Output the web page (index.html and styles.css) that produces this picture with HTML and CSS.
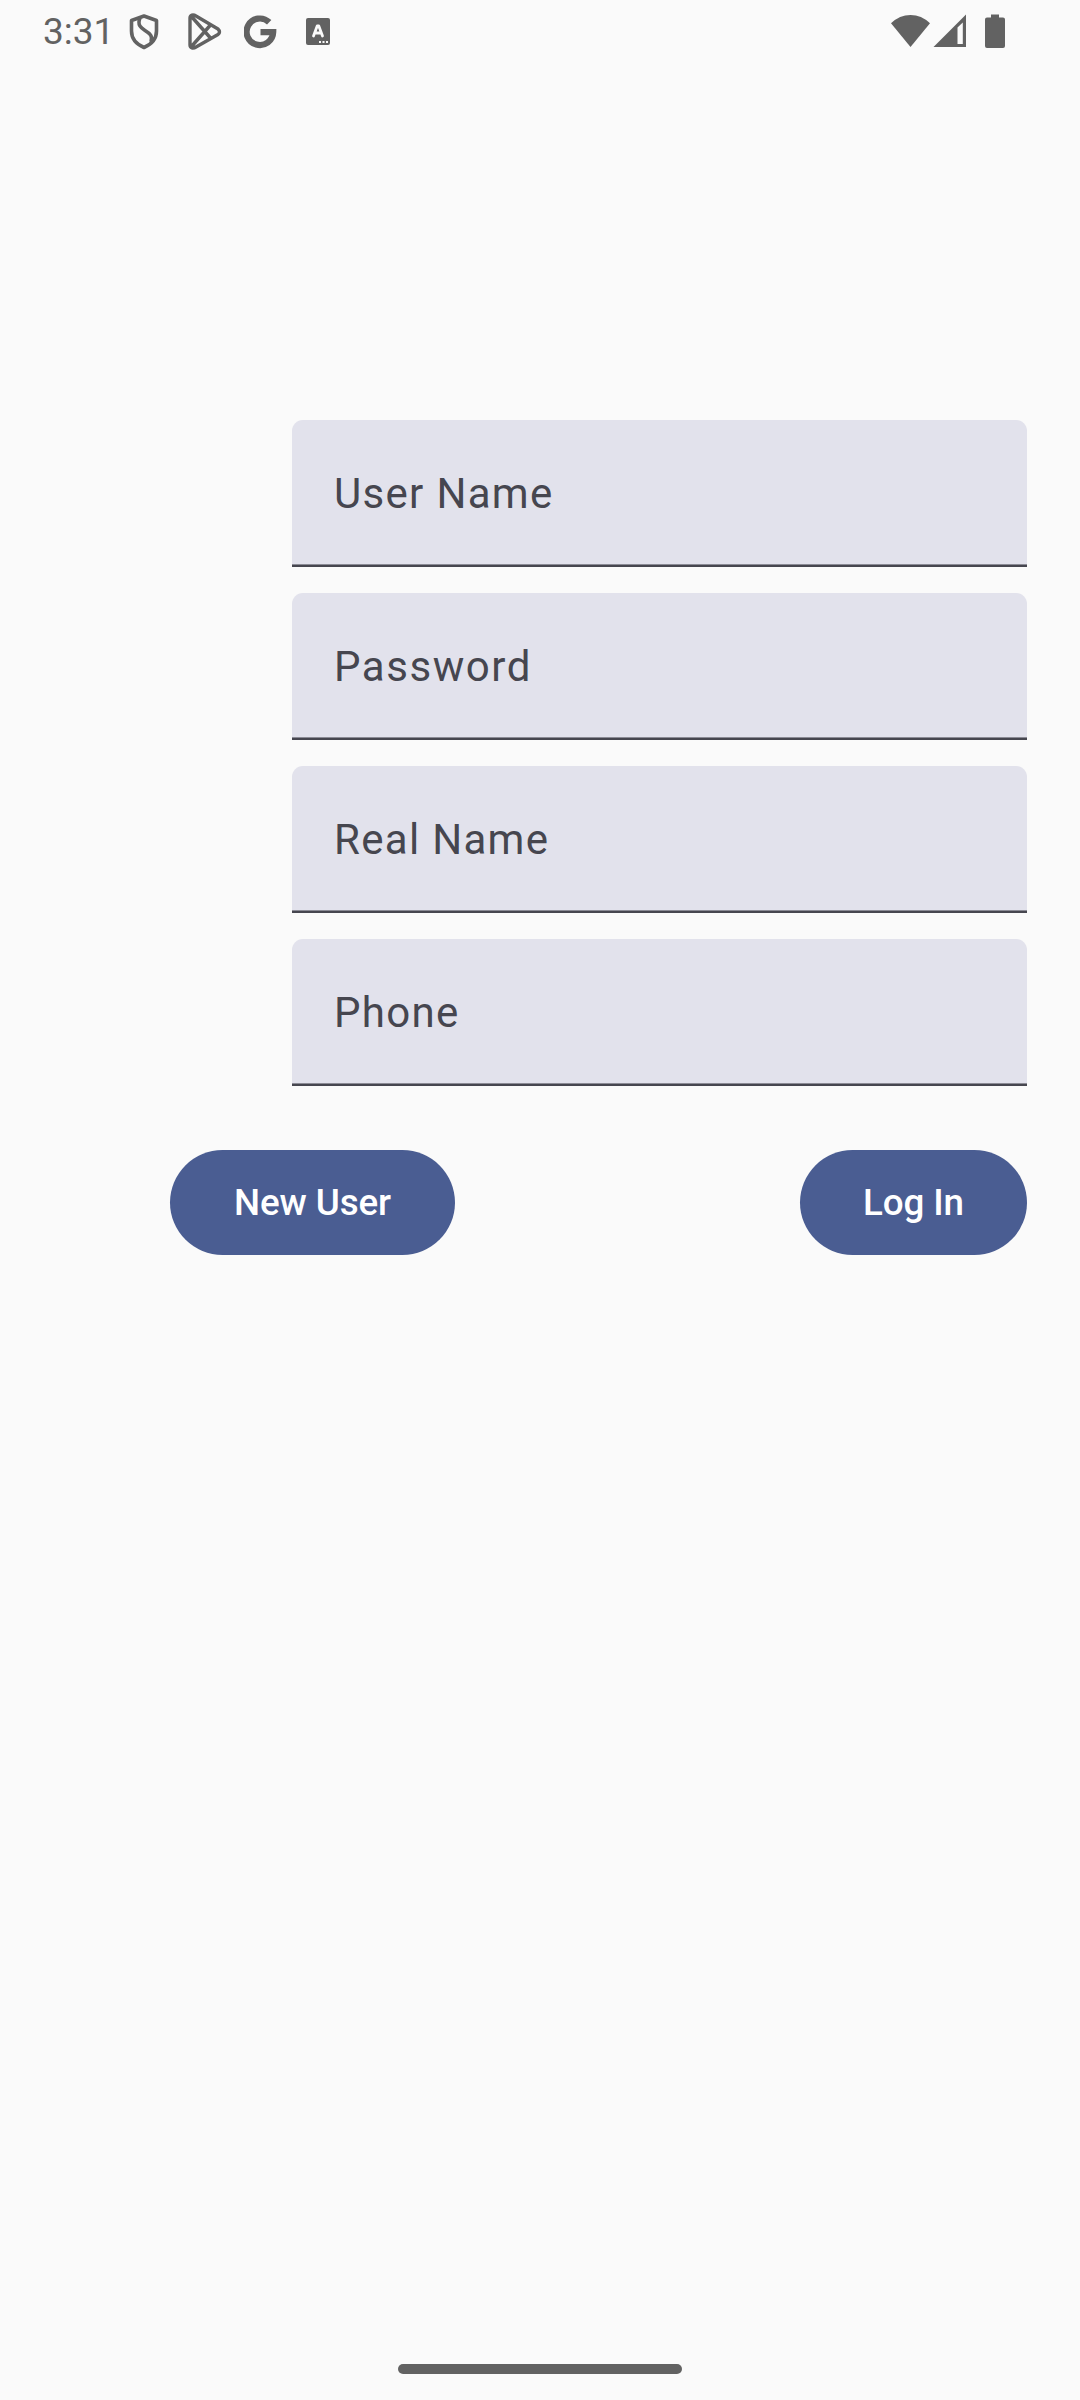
FILE: index.html
```html
<!DOCTYPE html>
<html lang="en">
<head>
<meta charset="utf-8">
<title>Log In</title>
<link rel="stylesheet" href="styles.css">
</head>
<body>
<header class="status">
  <div class="status-left">
    <span class="clock">3:31</span>
    <svg class="shield" width="30" height="36" viewBox="0 0 30 36" fill="none" stroke="#626262" stroke-width="3.6" stroke-linejoin="round"><path d="M15 2 L27.5 6.5 V17 C27.5 25 22 30.5 15 33.5 C8 30.5 2.5 25 2.5 17 V6.5 Z"/><path d="M11 4 C8 11 12 14 16 16.5 C21 19.5 24 22 22 28"/></svg>
    <svg class="play" width="34" height="38" viewBox="0 0 34 38" fill="none" stroke="#626262" stroke-width="3.4" stroke-linejoin="round"><path d="M2 5 V32 C2 35 5 36 8 34 L30 21.500 Q33 19 30 16 L8 3 C5 1 2 2 2 5 Z M3 3 L22.500 25 M3 34 L22.500 12"/></svg>
    <svg class="google" width="33" height="34" viewBox="0 0 33 34" fill="none" stroke="#626262" stroke-width="6.200"><path d="M25.200 7.300 A13.300 13.300 0 1 0 29.200 17.200 H16.500"/></svg>
    <svg class="letter" width="24" height="27" viewBox="0 0 24 27"><rect width="24" height="27" rx="2" fill="#626262"/><path d="M7.500 18 L11.200 8 H12.800 L16.500 18 M9 15 H15" fill="none" stroke="#fafafa" stroke-width="2.800" stroke-linecap="round" stroke-linejoin="round"/><path d="M13 23h2v2h-2z M16.500 23h2v2h-2z M20 23h2v2h-2z" fill="#fafafa"/></svg>
  </div>
  <div class="status-right">
    <svg class="wifi" width="40" height="34" viewBox="0 0 40 34"><path d="M1 9.300 Q9.500 1 20.500 1 Q31.500 1 40 9.300 L20.500 33 Z"/></svg>
    <svg class="signal" width="33" height="34" viewBox="0 0 33 34"><path fill-rule="evenodd" d="M.5 33 L33 .5 V33 Z M24.500 30 H29.800 V8.500 L24.500 13.500 Z"/></svg>
    <svg class="battery" width="20" height="34" viewBox="0 0 20 34"><path d="M6 0.500 H14 V3.500 H18 Q20 3.500 20 5.500 V32 Q20 34 18 34 H2 Q0 34 0 32 V5.500 Q0 3.500 2 3.500 H6 Z"/></svg>
  </div>
</header>
<main class="form">
  <label class="field">User Name</label>
  <label class="field password">Password</label>
  <label class="field">Real Name</label>
  <label class="field">Phone</label>
  <div class="actions"><button class="button new-user">New User</button><button class="button log-in">Log In</button></div>
</main>
<div class="home-bar"></div>
</body>
</html>
```
FILE: styles.css
```css
* { box-sizing: border-box; }
body { margin: 0; height: 2400px; background: #fafafa; font-family: Roboto, sans-serif; display: flex; flex-direction: column; }
.status { height: 63px; padding: 0 75px 0 43px; display: flex; justify-content: space-between; align-items: center; color: #626262; }
.status-left, .status-right { display: flex; align-items: center; }
.status-right { fill: #626262; padding-bottom: 1px; }
.clock { font-size: 37px; width: 86px; }
.play { margin-left: 29px; }
.google { margin-left: 22px; }
.letter { margin-left: 29px; }
.signal { margin-left: 3px; }
.battery { margin-left: 19px; }
.form { margin: 357px 53px 0 170px; display: flex; flex-direction: column; gap: 26px; }
.field {
  margin-left: 122px;
  height: 147px;
  padding: 0 0 1px 42px;
  display: flex;
  align-items: center;
  background: linear-gradient(#8b8b95, #8b8b95) left bottom 2px / 100% 1px no-repeat, linear-gradient(#46464f, #46464f) left bottom / 100% 2px no-repeat, #e2e2ec;
  border-radius: 11px 11px 0 0;
  color: #46464f;
  font-size: 42px;
  letter-spacing: 1.3125px;
}
.password { letter-spacing: 1.55px; }
.actions { display: flex; justify-content: space-between; margin-top: 38px; }
.button { height: 105px; padding: 0; border: 0; border-radius: 53px; background: #4a5d92; color: #fff; font: 500 36.75px Roboto, sans-serif; letter-spacing: -0.12px; }
.new-user { width: 285px; }
.log-in { width: 227px; }
.home-bar { width: 284px; height: 10px; border-radius: 5px; background: #626262; margin: auto auto 26px; }
```
